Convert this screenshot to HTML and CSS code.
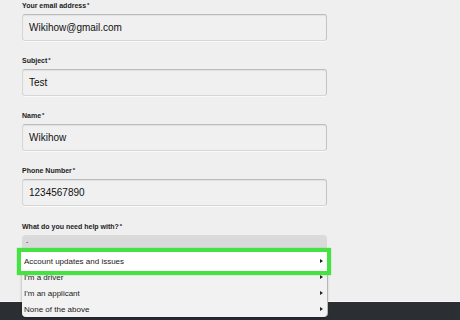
FILE: index.html
```html
<!DOCTYPE html>
<html>
<head>
<meta charset="utf-8">
<link rel="stylesheet" href="styles.css">
</head>
<body>
<main class="form">
  <div class="field">
    <label class="label">Your email address<span class="req">*</span></label>
    <div class="input">Wikihow@gmail.com</div>
  </div>
  <div class="field">
    <label class="label">Subject<span class="req">*</span></label>
    <div class="input">Test</div>
  </div>
  <div class="field">
    <label class="label">Name<span class="req">*</span></label>
    <div class="input">Wikihow</div>
  </div>
  <div class="field">
    <label class="label">Phone Number<span class="req">*</span></label>
    <div class="input">1234567890</div>
  </div>
  <div class="field field-last">
    <label class="label">What do you need help with?<span class="req">*</span></label>
    <div class="select">
      <div class="select-head">-</div>
      <ul class="menu">
        <li class="option option-active">Account updates and issues<span class="chev"></span></li>
        <li class="option">I'm a driver<span class="chev"></span></li>
        <li class="option">I'm an applicant<span class="chev"></span></li>
        <li class="option">None of the above<span class="chev"></span></li>
      </ul>
    </div>
  </div>
</main>
<footer class="dock"></footer>
</body>
</html>
```

FILE: styles.css
```css
html, body {
  margin: 0;
  padding: 0;
}
body {
  height: 320px;
  overflow: hidden;
  background: #efefef;
  display: flex;
  flex-direction: column;
  font-family: "Liberation Sans", Arial, sans-serif;
  color: #1e1e1e;
}
.form {
  width: 305px;
  padding-left: 22px;
  display: flex;
  flex-direction: column;
  gap: 14px;
}
.field {
  display: flex;
  flex-direction: column;
  gap: 4px;
}
.field-last {
  margin-top: 1px;
}
.label {
  font-size: 7px;
  font-weight: bold;
  line-height: 10px;
  height: 10px;
  color: #1c1c1c;
}
.req {
  font-size: 6px;
  vertical-align: 1px;
  margin-left: 1px;
}
.input {
  box-sizing: border-box;
  height: 27px;
  padding-left: 6px;
  font-size: 10px;
  line-height: 25px;
  color: #111;
  background: #f0f0f0;
  border: 1px solid #d6d6d6;
  border-top-color: #bcbcbc;
  border-right-color: #c4c4c4;
  border-radius: 3px;
  box-shadow: inset 0 1px 1px rgba(0,0,0,0.06), 0 1px 0 rgba(255,255,255,0.6);
}
.select {
  position: relative;
  z-index: 2;
}
.select-head {
  height: 18px;
  box-sizing: border-box;
  padding-left: 4px;
  font-size: 7px;
  line-height: 14px;
  background: #dadada;
  border-radius: 4px 4px 0 0;
  color: #333;
}
.menu {
  position: absolute;
  top: 18px;
  left: 0;
  right: 0;
  margin: 0;
  padding: 0;
  list-style: none;
  background: #f2f2f2;
  border-radius: 0 0 4px 4px;
  box-shadow: 0 1px 3px rgba(0,0,0,0.35), 1px 0 0 #d0d0d0;
}
.option {
  position: relative;
  height: 16px;
  display: flex;
  align-items: center;
  justify-content: space-between;
  padding: 0 4px 0 2px;
  font-size: 8px;
  color: #1a1a1a;
}
.option-active {
  z-index: 1;
  background: #fff;
}
.option-active::before {
  content: "";
  position: absolute;
  top: -5px;
  bottom: -6px;
  left: -5px;
  right: -4px;
  border: 4px solid #46e244;
  background: #fff;
  z-index: -1;
  box-shadow: 0 0 1px #46e244;
}
.chev {
  width: 0;
  height: 0;
  border-left: 3px solid #222;
  border-top: 2px solid transparent;
  border-bottom: 2px solid transparent;
}
.dock {
  margin-top: auto;
  height: 18px;
  background: #2b2f34;
  box-shadow: 0 -1px 0 #f8f8f8;
}
```
